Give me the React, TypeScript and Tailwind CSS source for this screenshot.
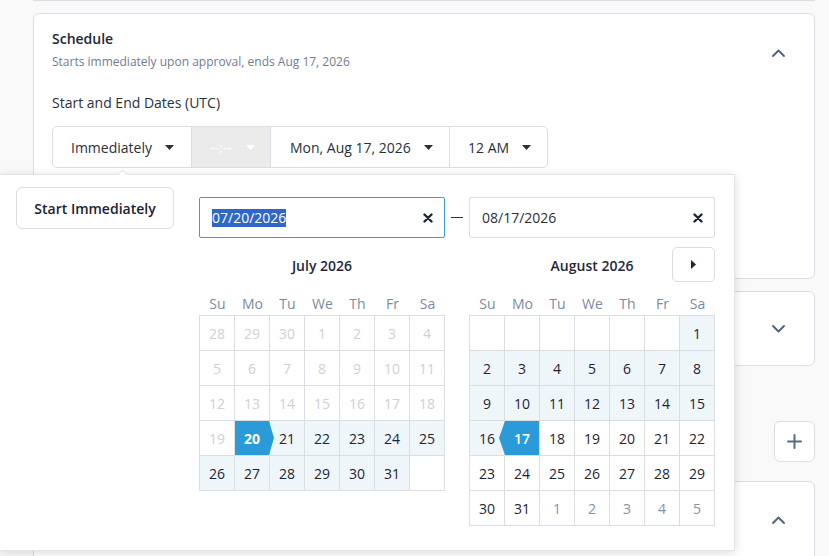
import React from "react";

type Kind = "empty" | "disabled" | "range" | "normal" | "other" | "start" | "end";
type Cell = { label?: string; kind: Kind };

const nums = (a: number, b: number) => Array.from({ length: b - a + 1 }, (_, i) => String(a + i));

const julyCells: Cell[] = [
  ...["28", "29", "30"].map((l) => ({ label: l, kind: "disabled" as Kind })),
  ...nums(1, 19).map((l) => ({ label: l, kind: "disabled" as Kind })),
  { label: "20", kind: "start" },
  ...nums(21, 31).map((l) => ({ label: l, kind: "range" as Kind })),
  { kind: "empty" },
];

const augustCells: Cell[] = [
  ...Array.from({ length: 6 }, () => ({ kind: "empty" as Kind })),
  ...nums(1, 16).map((l) => ({ label: l, kind: "range" as Kind })),
  { label: "17", kind: "end" },
  ...nums(18, 31).map((l) => ({ label: l, kind: "normal" as Kind })),
  ...nums(1, 5).map((l) => ({ label: l, kind: "other" as Kind })),
];

const weekdays = ["Su", "Mo", "Tu", "We", "Th", "Fr", "Sa"];

function Caret({ className = "fill-[#2a2f38]" }: { className?: string }) {
  return (
    <svg width="9" height="5" viewBox="0 0 9 5" className={className}>
      <path d="M0 0h9L4.5 5z" />
    </svg>
  );
}

function Chevron({ up }: { up?: boolean }) {
  return (
    <svg width="13" height="8" viewBox="0 0 13 8" fill="none" className="stroke-[#4f607a]" strokeWidth="1.8" strokeLinecap="round" strokeLinejoin="round">
      {up ? <path d="M1 7 6.5 1.5 12 7" /> : <path d="M1 1l5.5 5.5L12 1" />}
    </svg>
  );
}

function ClearIcon() {
  return (
    <svg width="10" height="10" viewBox="0 0 10 10" className="stroke-[#1c2636]" strokeWidth="2.4" strokeLinecap="round">
      <path d="M1.5 1.5l7 7M8.5 1.5l-7 7" />
    </svg>
  );
}

function DayCell({ cell }: { cell: Cell }) {
  const base = "h-[35px] border-r border-b border-[#dadde2] flex items-center justify-center text-[14px]";
  switch (cell.kind) {
    case "empty":
      return <div className={`${base} bg-white`} />;
    case "disabled":
      return <div className={`${base} bg-white text-[#cdd1d7]`}>{cell.label}</div>;
    case "range":
      return <div className={`${base} bg-[#eff6fa] text-[#1d2533]`}>{cell.label}</div>;
    case "normal":
      return <div className={`${base} bg-white text-[#1d2533]`}>{cell.label}</div>;
    case "other":
      return <div className={`${base} bg-white text-[#8492a6]`}>{cell.label}</div>;
    case "start":
      return (
        <div className={`${base} relative z-10 bg-white`}>
          <div className="absolute left-0 top-0 h-full w-[39px] bg-[#2a9ad8] [clip-path:polygon(0_0,34px_0,39px_50%,34px_100%,0_100%)]" />
          <span className="relative font-bold text-white">{cell.label}</span>
        </div>
      );
    case "end":
      return (
        <div className={`${base} relative z-10 bg-white`}>
          <div className="absolute left-[-6px] top-0 h-full w-[40px] bg-[#2a9ad8] [clip-path:polygon(6px_0,40px_0,40px_100%,6px_100%,0_50%)]" />
          <span className="relative font-semibold text-white">{cell.label}</span>
        </div>
      );
  }
}

function Month({ title, cells, withNext }: { title: string; cells: Cell[]; withNext?: boolean }) {
  return (
    <div className="w-[246px]">
      <div className="relative mt-[9px] flex h-[35px] items-center justify-center pt-[1px] text-[14px] font-semibold text-[#1f2a3c]">
        {title}
        {withNext && (
          <button className="absolute right-0 top-0 flex h-[35px] w-[43px] items-center justify-center rounded-[5px] border border-[#dadde2] bg-white">
            <svg width="5" height="9" viewBox="0 0 5 9" className="fill-[#1c2636]">
              <path d="M0 0l5 4.5L0 9z" />
            </svg>
          </button>
        )}
      </div>
      <div className="grid h-[33px] grid-cols-[repeat(7,35px)] items-end pb-[1px] pl-[1px] text-[14px] leading-[20px] text-[#7d8ba0]">
        {weekdays.map((d) => (
          <div key={d} className="text-center">
            {d}
          </div>
        ))}
      </div>
      <div className="grid grid-cols-[repeat(7,35px)] border-l border-t border-[#dadde2]">
        {cells.map((c, i) => (
          <DayCell key={i} cell={c} />
        ))}
      </div>
    </div>
  );
}

export default function App() {
  return (
    <div className="relative h-[556px] w-[829px] overflow-hidden bg-[#f9f9fa] font-['Open_Sans',sans-serif]">
      <div className="pl-[33px] pr-[14px]">
        {/* end of the section above */}
        <div className="h-[1px] border-b border-[#dadde2] bg-white" />

        {/* Schedule section */}
        <div className="mt-[12px] h-[266px] rounded-[6px] border border-[#dadde2] bg-white pl-[18px] pr-[29px] pt-[15px]">
          <div className="flex items-start justify-between">
            <div>
              <div className="text-[14px] font-semibold leading-[20px] text-[#1e2838]">Schedule</div>
              <div className="mt-[5px] text-[12px] leading-[16px] text-[#6f7d91]">
                Starts immediately upon approval, ends Aug 17, 2026
              </div>
            </div>
            <div className="mt-[20px]">
              <Chevron up />
            </div>
          </div>
          <div className="mt-[23px] text-[14px] leading-[20px] text-[#2b313b]">Start and End Dates (UTC)</div>
          <div className="mt-[13px] flex h-[42px] w-[496px] overflow-hidden rounded-[5px] border border-[#dadde2] text-[14px] text-[#2a303a]">
            <div className="flex w-[138px] items-center gap-[13px] pl-[18px]">
              <span>Immediately</span>
              <Caret />
            </div>
            <div className="flex w-[79px] items-center gap-[14px] border-l border-[#dadde2] bg-[#ebebeb] pl-[18px] text-white">
              <span>--:--</span>
              <Caret className="fill-white" />
            </div>
            <div className="flex w-[179px] items-center gap-[13px] border-l border-[#dadde2] pl-[19px]">
              <span>Mon, Aug 17, 2026</span>
              <Caret />
            </div>
            <div className="flex flex-1 items-center gap-[13px] border-l border-[#dadde2] pl-[18px]">
              <span>12 AM</span>
              <Caret />
            </div>
          </div>
        </div>

        {/* collapsed section */}
        <div className="mt-[12px] flex h-[75px] items-center justify-end rounded-[6px] border border-[#dadde2] bg-white pr-[29px]">
          <Chevron />
        </div>

        <div className="mt-[55px] flex justify-end">
          <button className="flex h-[41px] w-[41px] items-center justify-center rounded-[6px] border border-[#dadde2] bg-white">
            <svg width="15" height="15" viewBox="0 0 15 15" className="stroke-[#5a6a82]" strokeWidth="2" strokeLinecap="round">
              <path d="M7.5 1v13M1 7.5h13" />
            </svg>
          </button>
        </div>

        {/* next section */}
        <div className="mt-[19px] flex h-[90px] items-start justify-end rounded-t-[6px] border border-[#dadde2] bg-white pr-[29px] pt-[34px]">
          <Chevron up />
        </div>
      </div>

      {/* date range popover */}
      <div className="absolute left-0 top-[174px] h-[377px] w-[735px] border-r border-t border-b border-[#e2e4e8] bg-white shadow-[0_2px_10px_rgba(0,0,0,0.14)]">
        <div className="absolute left-[119px] top-[-4px] h-[7px] w-[7px] rotate-45 border-l border-t border-[#e2e4e8] bg-white" />
        <div className="flex pl-[16px] pt-[12px]">
          <button className="h-[42px] w-[158px] rounded-[6px] border border-[#dadde2] bg-white text-[14px] font-semibold text-[#1b2233]">
            Start Immediately
          </button>
          <div className="ml-[25px] mt-[10px] w-[516px]">
            <div className="flex items-center">
              <div className="flex h-[41px] w-[246px] items-center justify-between rounded-[2px] border border-[#3c9ad6] pl-[12px] pr-[11px]">
                <span className="bg-[#2f66c8] text-[14px] leading-[18px] text-white">07/20/2026</span>
                <ClearIcon />
              </div>
              <div className="flex w-[24px] justify-center">
                <div className="h-[1px] w-[12px] bg-[#2b313b]" />
              </div>
              <div className="flex h-[41px] w-[246px] items-center justify-between rounded-[2px] border border-[#dadde2] pl-[12px] pr-[11px]">
                <span className="text-[14px] text-[#2a303a]">08/17/2026</span>
                <ClearIcon />
              </div>
            </div>
            <div className="flex items-start gap-[24px]">
              <Month title="July 2026" cells={julyCells} />
              <Month title="August 2026" cells={augustCells} withNext />
            </div>
          </div>
        </div>
      </div>
    </div>
  );
}
